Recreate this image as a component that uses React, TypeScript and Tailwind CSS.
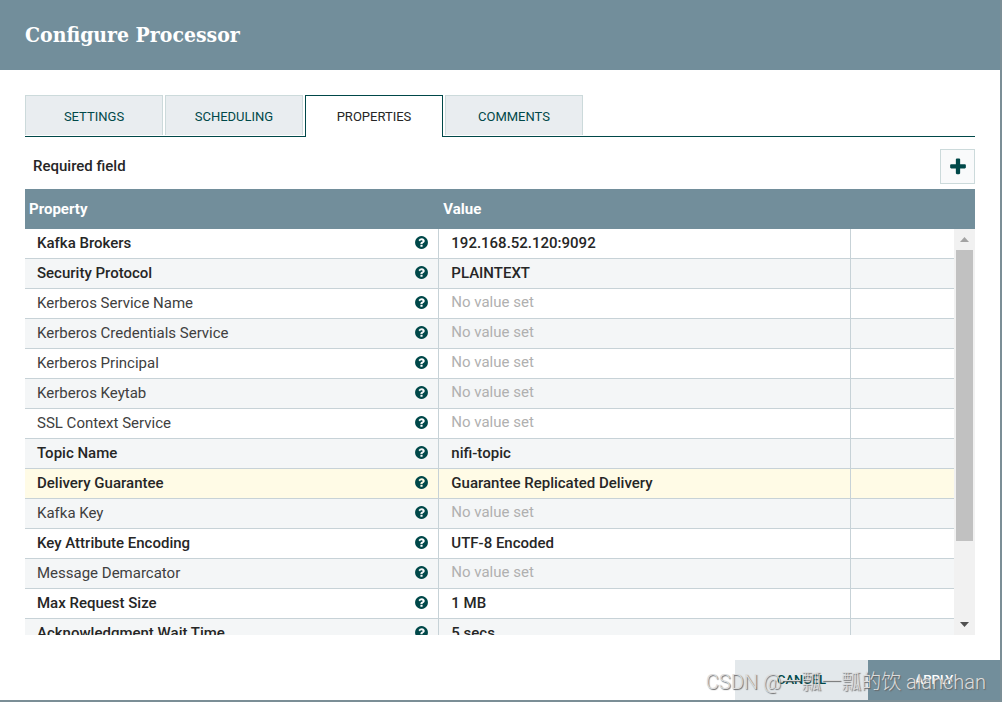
import React, { useState } from 'react';

interface ProcessorProperty {
  name: string;
  value?: string;
  required?: boolean;
}

const tabs = ['Settings', 'Scheduling', 'Properties', 'Comments'];

const properties: ProcessorProperty[] = [
  { name: 'Kafka Brokers', value: '192.168.52.120:9092', required: true },
  { name: 'Security Protocol', value: 'PLAINTEXT', required: true },
  { name: 'Kerberos Service Name' },
  { name: 'Kerberos Credentials Service' },
  { name: 'Kerberos Principal' },
  { name: 'Kerberos Keytab' },
  { name: 'SSL Context Service' },
  { name: 'Topic Name', value: 'nifi-topic', required: true },
  { name: 'Delivery Guarantee', value: 'Guarantee Replicated Delivery', required: true },
  { name: 'Kafka Key' },
  { name: 'Key Attribute Encoding', value: 'UTF-8 Encoded', required: true },
  { name: 'Message Demarcator' },
  { name: 'Max Request Size', value: '1 MB', required: true },
  { name: 'Acknowledgment Wait Time', value: '5 secs', required: true },
];

const HelpIcon: React.FC = () => (
  <svg className="size-[15px] shrink-0 text-[#004849]" viewBox="0 0 1792 1792" fill="currentColor" aria-hidden="true">
    <path d="M1024 1376v-192q0-14-9-23t-23-9h-192q-14 0-23 9t-9 23v192q0 14 9 23t23 9h192q14 0 23-9t9-23zm256-672q0-88-55.5-163t-138.5-116-170-41q-243 0-371 213-15 24 8 42l132 100q7 6 19 6 16 0 25-12 53-68 86-92 34-24 86-24 48 0 85.5 26t37.5 59q0 38-20 61t-68 45q-63 28-115.5 86.5t-52.5 125.5v36q0 14 9 23t23 9h192q14 0 23-9t9-23q0-19 21.5-49.5t54.5-49.5q32-18 49-28.5t46-35 44.5-48 28-60.5 12.5-81zm384 192q0 209-103 385.5t-279.5 279.5-385.5 103-385.5-103-279.5-279.5-103-385.5 103-385.5 279.5-279.5 385.5-103 385.5 103 279.5 279.5 103 385.5z" />
  </svg>
);

const PlusIcon: React.FC = () => (
  <svg className="size-5" viewBox="0 0 1792 1792" fill="currentColor" aria-hidden="true">
    <path d="M1600 736v192q0 40-28 68t-68 28h-416v416q0 40-28 68t-68 28h-192q-40 0-68-28t-28-68v-416h-416q-40 0-68-28t-28-68v-192q0-40 28-68t68-28h416v-416q0-40 28-68t68-28h192q40 0 68 28t28 68v416h416q40 0 68 28t28 68z" />
  </svg>
);

const Scrollbar: React.FC = () => (
  <div className="flex flex-1 flex-col bg-[#f1f1f1]" aria-hidden="true">
    <div className="flex h-[21px] items-center justify-center">
      <svg className="h-[5px] w-[9px]" viewBox="0 0 9 5">
        <path d="M0 5L4.5 0 9 5z" fill="#a3a3a3" />
      </svg>
    </div>
    <div className="flex-1 px-0.5">
      <div className="h-4/5 bg-[#c1c1c1]" />
    </div>
    <div className="flex h-[21px] items-center justify-center">
      <svg className="h-[5px] w-[9px]" viewBox="0 0 9 5">
        <path d="M0 0h9L4.5 5z" fill="#505050" />
      </svg>
    </div>
  </div>
);

export default function App() {
  const [activeTab, setActiveTab] = useState('Properties');
  const [selected, setSelected] = useState('Delivery Guarantee');

  return (
    <div className="h-screen bg-[#7b8e96] pr-0.5 pb-0.5 font-[Roboto,sans-serif] text-[#262626]">
      <div className="flex h-full flex-col bg-white">
        <header className="flex h-[70px] shrink-0 items-center bg-[#728e9b] px-[25px]">
          <h1 className="font-['Roboto_Slab','DejaVu_Serif_Condensed','DejaVu_Serif',serif] text-[21px] font-bold text-white">
            Configure Processor
          </h1>
        </header>

        <main className="flex min-h-0 flex-1 flex-col px-[25px] pt-[25px]">
          {/* Tabs */}
          <div role="tablist" className="flex shrink-0 gap-0.5 border-b border-[#004849]">
            {tabs.map((tab) => (
              <button
                key={tab}
                type="button"
                role="tab"
                aria-selected={tab === activeTab}
                onClick={() => setActiveTab(tab)}
                className={
                  tab === activeTab
                    ? '-mb-px h-[42px] w-[138px] border border-b-0 border-[#004849] bg-white text-[13px] uppercase'
                    : 'mb-px h-10 w-[138px] border border-b-0 border-[#ccdadb] bg-[#e9edf0] pt-0.5 text-[13px] text-[#004849] uppercase'
                }
              >
                {tab}
              </button>
            ))}
          </div>

          <div className="mt-3 mb-[5px] flex shrink-0 items-center justify-between pl-2">
            <span className="text-[15px] font-medium">Required field</span>
            <button
              type="button"
              aria-label="Add property"
              className="flex size-[35px] items-center justify-center border border-[#ccdadb] bg-[#f9fafb] text-[#004849]"
            >
              <PlusIcon />
            </button>
          </div>

          {/* Property table */}
          <div className="flex min-h-0 flex-1">
            <div className="min-w-0 flex-1 overflow-hidden">
              <table className="w-full table-fixed border-separate border-spacing-0 text-left text-[15px] leading-5">
                <colgroup>
                  <col className="w-[44.6%]" />
                  <col className="w-[44.3%]" />
                  <col />
                </colgroup>
                <thead>
                  <tr className="h-10 bg-[#728e9b] text-white">
                    <th className="px-1 font-bold">Property</th>
                    <th className="px-1 font-bold">Value</th>
                    <th aria-label="Actions" />
                  </tr>
                </thead>
                <tbody>
                  {properties.map((property) => (
                    <tr
                      key={property.name}
                      onClick={() => setSelected(property.name)}
                      className={property.name === selected ? 'h-[30px] bg-[#fffbe6]' : 'h-[30px] odd:bg-white even:bg-[#f4f6f7]'}
                    >
                      <td className="border-r border-b border-[#c7d2d7] pr-[9px] pb-0.5 pl-3">
                        <div className="flex items-center justify-between">
                          <span className={property.required ? 'font-medium' : 'font-normal text-[#404040]'}>{property.name}</span>
                          <HelpIcon />
                        </div>
                      </td>
                      <td className={property.value ? 'border-r border-b border-[#c7d2d7] px-3 pb-0.5' : 'border-r border-b border-[#c7d2d7] px-3 pb-1'}>
                        {property.value ? (
                          <span className="font-medium">{property.value}</span>
                        ) : (
                          <span className="text-[#b0b0b0]">No value set</span>
                        )}
                      </td>
                      <td className="border-b border-[#c7d2d7]" />
                    </tr>
                  ))}
                </tbody>
              </table>
            </div>
            <div className="flex w-[21px] flex-col bg-[#728e9b] pt-10">
              <Scrollbar />
            </div>
          </div>
        </main>

        <footer className="mt-[25px] flex shrink-0 justify-end text-[13px] font-medium">
          <button type="button" className="h-10 w-[133px] bg-[#e3e8eb] text-[#004849]">
            CANCEL
          </button>
          <button type="button" className="h-10 w-[132px] bg-[#728e9b] text-white">
            APPLY
          </button>
        </footer>
      </div>

      <div className="pointer-events-none absolute right-4 bottom-2 font-[Roboto,'Noto_Sans_CJK_SC',sans-serif] text-[20px] leading-6 font-light whitespace-nowrap text-[#dcdcdc] [text-shadow:1px_1px_1px_#666]">
        CSDN @一瓢一瓢的饮 alanchan
      </div>
    </div>
  );
}
